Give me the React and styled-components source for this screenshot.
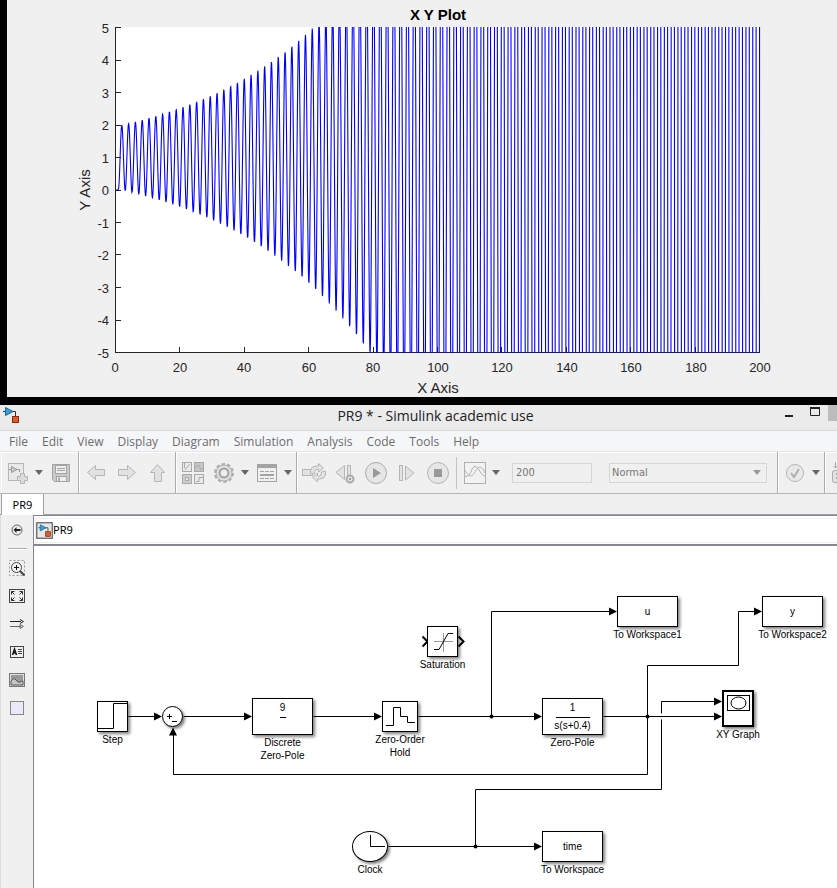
import React from "react";
import styled, { createGlobalStyle, css } from "styled-components";

const GlobalStyle = createGlobalStyle`
  * { box-sizing: border-box; }
  html, body { margin: 0; padding: 0; }
  body { background: #f0f0f0; overflow-x: hidden; }
  button, input, select { font: inherit; color: inherit; margin: 0; padding: 0; }
`;

const uiFont = `"Open Sans", "Noto Sans", sans-serif`;
const tahoma = `"Noto Sans", "DejaVu Sans", sans-serif`;
const fieldFont = `"DejaVu Sans Condensed", "Noto Sans", sans-serif`;
const arial = `"Liberation Sans", Arial, sans-serif`;

const Page = styled.div`
  display: flex;
  flex-direction: column;
  min-height: 100vh;
  font-family: ${uiFont};
`;

/* ---------- plot figure ---------- */

const Figure = styled.section`
  background: #f0f0f0;
  border-left: 7px solid #000;
  border-bottom: 8px solid #000;
`;

const PlotSvg = styled.svg`
  display: block;
  width: 100%;
  height: auto;
  font-family: ${arial};
  font-size: 13px;
  fill: #262626;
`;

const AX = { left: 108, right: 753, top: 27, bottom: 353 };
const px = (t) => AX.left + 0.5 + (t / 200) * (AX.right - AX.left - 1);
const py = (v) => AX.top + 0.5 + ((5 - v) / 10) * (AX.bottom - AX.top - 1);
const labelX = (t) => Math.round(AX.left + (t / 200) * (AX.right - AX.left));

function response(t) {
  if (t < 0.9) return 0;
  const omega = (2 * Math.PI) / 2.1125;
  return 1 - Math.exp(0.0234 * (t - 2.2)) * Math.cos(omega * (t - 0.9));
}

/* Runs slightly past t = 200 so the last stroke crosses the whole axes box. */
function curvePath() {
  const parts = [];
  for (let i = 0; i <= 2002; i += 1) {
    const t = i / 10;
    parts.push(`${i ? "L" : "M"}${px(t).toFixed(2)} ${py(response(t)).toFixed(2)}`);
  }
  return parts.join("");
}

const CURVE = curvePath();
const X_TICKS = [0, 20, 40, 60, 80, 100, 120, 140, 160, 180, 200];
const Y_TICKS = [5, 4, 3, 2, 1, 0, -1, -2, -3, -4, -5];

function Plot() {
  return (
    <PlotSvg viewBox="0 0 830 397" role="img" aria-label="X Y Plot">
      <defs>
        <clipPath id="axes">
          <rect x="108" y="27" width="646" height="326" />
        </clipPath>
      </defs>
      <rect x="108" y="27" width="645" height="326" fill="#fff" />
      <g stroke="#262626" shapeRendering="crispEdges">
        <path d="M108.5 27V353M108 352.5H753" />
        {X_TICKS.map((t) => (
          <path key={t} d={`M${Math.floor(px(t)) + 0.5} 353v-6`} />
        ))}
        {Y_TICKS.map((v) => (
          <path key={v} d={`M108 ${Math.floor(py(v)) + 0.5}h6`} />
        ))}
      </g>
      <path d={CURVE} fill="none" stroke="#00f" strokeWidth="1.1" clipPath="url(#axes)" />
      <text x="431" y="20" textAnchor="middle" fontSize="15" fontWeight="700" fill="#000">
        X Y Plot
      </text>
      {X_TICKS.map((t) => (
        <text key={t} x={labelX(t)} y="372" textAnchor="middle">{t}</text>
      ))}
      {Y_TICKS.map((v) => (
        <text key={v} x="102" y={Math.round(py(v)) + 5} textAnchor="end">{v}</text>
      ))}
      <text x="431" y="393" textAnchor="middle" fontSize="15">X Axis</text>
      <text transform="translate(83 190) rotate(-90)" textAnchor="middle" fontSize="15">Y Axis</text>
    </PlotSvg>
  );
}

/* ---------- window chrome ---------- */

const Window = styled.section`
  flex: 1;
  display: flex;
  flex-direction: column;
  overflow: hidden;
`;

const TitleBar = styled.header`
  display: flex;
  height: 26px;
  background: #ebebeb;
  border-bottom: 1px solid #dadada;
`;

const TitleIcon = styled.div`
  width: 95px;
  padding: 2px 3px;
`;

const Title = styled.h1`
  flex: 1;
  margin: 0;
  font-size: 14px;
  font-weight: 400;
  line-height: 22px;
  text-align: center;
  white-space: nowrap;
  color: #222;
`;

const WindowControls = styled.div`
  display: flex;
  width: 61px;
`;

const WindowButton = styled.button`
  display: flex;
  align-items: center;
  justify-content: center;
  width: 26px;
  height: 16px;
  border: 0;
  background: ${(p) => (p.$close ? "#bcbcbc" : "transparent")};
  ${(p) => p.$close && css`width: 9px;`}
`;

const MenuBar = styled.nav`
  display: flex;
  gap: 14px;
  height: 21px;
  padding: 0 9px;
  background: #f5f6f8;
  border-bottom: 1px solid #e4e5e7;
`;

const MenuButton = styled.button`
  border: 0;
  background: none;
  font-size: 12px;
  line-height: 22px;
  color: #6d6d6d;
  white-space: nowrap;
`;

const ToolBar = styled.div`
  display: flex;
  height: 42px;
  padding-left: 1px;
  background: #f0f0f0;
  border-bottom: 1px solid #b4b4b4;
  box-shadow: inset 0 1px #fff;
`;

const ToolGroup = styled.div`
  display: flex;
  flex: none;
  align-items: center;
  gap: 1px;
  padding: 0 ${(p) => p.$end || 2}px 0 2px;
  border-right: 1px solid #adadad;
  box-shadow: inset 1px 1px #fff;
`;

const ToolButton = styled.button`
  display: flex;
  align-items: center;
  justify-content: center;
  width: 30px;
  height: 30px;
  border: 0;
  background: none;
`;

const CaretButton = styled(ToolButton)`
  width: 12px;
  margin-left: -1px;
`;

const ToolDivider = styled.div`
  width: 3px;
  height: 32px;
  border-right: 1px solid #c4c4c4;
  margin-right: 2px;
`;

const StopTime = styled.input`
  width: 80px;
  height: 20px;
  margin-left: 9px;
  padding: 0 3px;
  border: 1px solid #d6d6d6;
  background: #f0f0f0;
  font-family: ${fieldFont};
  font-size: 11px;
  color: #777;
`;

const SelectBox = styled.label`
  display: grid;
  align-items: center;
  width: 158px;
  height: 20px;
  margin-left: 16px;
  border: 1px solid #d6d6d6;
  svg { grid-area: 1 / 1; justify-self: end; margin-right: 5px; pointer-events: none; }
`;

const ModeSelect = styled.select`
  grid-area: 1 / 1;
  width: 100%;
  height: 18px;
  padding: 0 2px;
  border: 0;
  appearance: none;
  background: transparent;
  font-family: ${fieldFont};
  font-size: 11px;
  color: #777;
`;

const TabStrip = styled.div`
  display: flex;
  height: 21px;
  padding-left: 1px;
  box-shadow: inset 0 -1px #a0a0a0;
`;

const Tab = styled.button`
  width: 43px;
  border: 1px solid #a0a0a0;
  border-width: 0 1px;
  background: #fff;
  font-family: ${tahoma};
  font-size: 11px;
  line-height: 20px;
  color: #000;
`;

const Workspace = styled.div`
  flex: 1;
  display: flex;
`;

const Palette = styled.aside`
  display: flex;
  flex-direction: column;
  align-items: center;
  width: 33px;
  padding-top: 1px;
  border-left: 1px solid #dcdcdc;
`;

const PaletteButton = styled.button`
  display: flex;
  align-items: center;
  justify-content: center;
  width: 24px;
  height: 28px;
  border: 0;
  background: none;
`;

const PaletteDivider = styled.div`
  width: 19px;
  height: 2px;
  margin: 4px 0;
  border-top: 1px solid #b0b0b0;
  background: #fff;
`;

const Editor = styled.main`
  flex: 1;
  min-width: 0;
  display: flex;
  flex-direction: column;
  border-left: 1px solid #858894;
  background: #fff;
`;

const PathBar = styled.div`
  display: flex;
  align-items: center;
  height: 31px;
  padding-left: 2px;
  border-top: 1px solid #858894;
  border-bottom: 2px solid #858894;
  box-shadow: inset 1px 2px #fff, inset 2px 3px #eee, inset 0 -1px #fff, inset 0 -2px #eee;
`;

const PathItem = styled.a`
  font-family: ${tahoma};
  font-size: 11px;
  line-height: 16px;
  color: #000;
  text-decoration: none;
`;

/* ---------- diagram ---------- */

const Canvas = styled.div`
  position: relative;
  flex: 1;
  min-height: 342px;
  overflow: hidden;
  font-family: ${arial};
  font-size: 10px;
  line-height: 13px;
  color: #000;
`;

const Wires = styled.svg`
  position: absolute;
  inset: 0;
  width: 100%;
  height: 100%;
`;

const Node = styled.figure`
  position: absolute;
  left: ${(p) => p.$x}px;
  top: ${(p) => p.$y}px;
  width: ${(p) => p.$w}px;
  margin: 0;
  display: flex;
  flex-direction: column;
  align-items: center;
  gap: 1px;
`;

const Block = styled.div`
  display: flex;
  flex-direction: column;
  align-items: center;
  justify-content: center;
  width: 100%;
  height: ${(p) => p.$h}px;
  border: ${(p) => (p.$thick ? 2 : 1)}px solid #000;
  border-radius: ${(p) => (p.$round ? "50%" : "0")};
  background: #fff;
  box-shadow: 2px 2px 3px rgba(0, 0, 0, 0.5);
  svg { display: block; flex: none; }
`;

const Caption = styled.figcaption`
  text-align: center;
  white-space: pre;
`;

const Fraction = styled.div`
  display: flex;
  flex-direction: column;
  align-items: center;
  span:first-child {
    min-width: ${(p) => p.$bar}px;
    height: 17px;
    border-bottom: 1px solid #000;
    text-align: center;
  }
  span:last-child { height: 15px; padding-top: 1px; }
`;

function DiagramNode({ x, y, w, h, label, children, ...rest }) {
  return (
    <Node $x={x} $y={y} $w={w}>
      <Block $h={h} {...rest}>{children}</Block>
      {label && <Caption>{label}</Caption>}
    </Node>
  );
}

const right = (x, y) => `M${x} ${y}l-8 -4v8z`;
const WIRES = [
  "M94 170H122",
  "M149 170H212",
  "M279 170H342",
  "M384 170H502",
  "M457 170V65H577",
  "M569 170H682",
  "M613 228V119H704V65H722",
  "M613 228H139V188",
  "M354 300H502",
  "M441 300V243H627V173",
  "M627 167V155H682",
];
const HEADS = [
  right(128, 170), right(218, 170), right(348, 170), right(508, 170), right(583, 65),
  right(728, 65), right(688, 170), right(688, 155), right(508, 300), "M139 181l-4 8h8z",
];

function Diagram() {
  return (
    <Canvas>
      <Wires aria-hidden="true">
        <g transform="translate(.5 .5)" fill="none" stroke="#000">
          {WIRES.map((d) => <path key={d} d={d} />)}
          <path d="M388 90l5 5l-5 5M424 90l5 5l-5 5" strokeWidth="2" />
        </g>
        <g transform="translate(0 .5)">
          {HEADS.map((d) => <path key={d} d={d} />)}
        </g>
        <circle cx="457.5" cy="170.5" r="2" />
        <circle cx="613.5" cy="170.5" r="2" />
        <circle cx="441.5" cy="300.5" r="2" />
      </Wires>

      <DiagramNode x={63} y={155} w={31} h={31} label="Step">
        <svg width="29" height="29" fill="none" stroke="#000"><path d="M0 26.5H15.5V1.5H29" /></svg>
      </DiagramNode>
      <DiagramNode x={128} y={160} w={21} h={21} $round>
        <svg width="19" height="19" fill="none" stroke="#000" shapeRendering="crispEdges"><path d="M4 9.5h5M6.5 7v5M9 14.5h5" /></svg>
      </DiagramNode>
      <DiagramNode x={218} y={152} w={61} h={37} label={"Discrete\nZero-Pole"}>
        <Fraction $bar={6}><span>9</span><span /></Fraction>
      </DiagramNode>
      <DiagramNode x={348} y={155} w={36} h={31} label={"Zero-Order\nHold"}>
        <svg width="34" height="29" fill="none" stroke="#000"><path d="M3 23.5H10.5V5.5H17.5V14.5H24.5V20.5H32" /></svg>
      </DiagramNode>
      <DiagramNode x={393} y={80} w={31} h={31} label="Saturation">
        <svg width="29" height="29" fill="none">
          <path d="M6 14.5H25M15.5 6V25" stroke="#999" />
          <path d="M6 22.5H11L20 6.5H25" stroke="#000" />
        </svg>
      </DiagramNode>
      <DiagramNode x={583} y={50} w={61} h={31} label="To Workspace1">u</DiagramNode>
      <DiagramNode x={728} y={50} w={61} h={31} label="To Workspace2">y</DiagramNode>
      <DiagramNode x={508} y={152} w={61} h={37} label="Zero-Pole">
        <Fraction $bar={34}><span>1</span><span>s(s+0.4)</span></Fraction>
      </DiagramNode>
      <DiagramNode x={688} y={144} w={32} h={37} label="XY Graph" $thick>
        <svg width="28" height="33" fill="none" stroke="#000">
          <rect x="3.5" y="3.5" width="22" height="15" />
          <ellipse cx="14.5" cy="11" rx="7.5" ry="6" />
        </svg>
      </DiagramNode>
      <DiagramNode x={318} y={285} w={36} h={31} label="Clock" $round>
        <svg width="34" height="29" fill="none" stroke="#000"><path d="M17.5 3V14.5H32" /></svg>
      </DiagramNode>
      <DiagramNode x={508} y={285} w={61} h={31} label="To Workspace">time</DiagramNode>
    </Canvas>
  );
}

/* ---------- icons ---------- */

const G = "#b5b5b5";
const F = "#e2e2e2";

function Caret({ light }) {
  return <svg width="8" height="5"><path d="M0 0h8L4 5z" fill={light ? "#999" : "#666"} /></svg>;
}

function ModelIcon({ framed }) {
  return (
    <svg width="17" height="17" viewBox={framed ? "-3 -3 22 22" : "0 0 17 17"}>
      {framed && <rect x="-2" y="-2" width="20" height="20" fill="#e8e8e8" stroke="#555" strokeWidth="1.5" />}
      <path d="M0 4.5H3M9 4.5H12.5V9" fill="none" stroke="#333" />
      <path d="M2.5 .5L10 4.5L2.5 8.5z" fill="#3aa0d8" stroke="#146a9c" />
      <rect x="9.5" y="9.5" width="6" height="6" fill="#e2592b" stroke="#8c2b10" />
    </svg>
  );
}

const toolIcons = {
  create: (
    <svg width="22" height="22" fill="none" stroke={G}>
      <rect x="1.5" y="1.5" width="15" height="17" fill="#e9e9e9" />
      <path d="M2 7.5H5M9.5 7.5H12.5V10" stroke="#999" />
      <path d="M4.5 4.5L10 7.5L4.5 10.5z" fill="#ccc" stroke="#999" />
      <path d="M13.5 11.5h4v3h3v4h-3v3h-4v-3h-3v-4h3z" fill="#dcdcdc" />
    </svg>
  ),
  save: (
    <svg width="20" height="20" fill={F} stroke="#a4a4a4">
      <path d="M1.5 1.5H18.5V18.5H3.5L1.5 16.5z" fill="#c9c9c9" />
      <rect x="4.5" y="2.5" width="11" height="8" fill="#f0f0f0" />
      <path d="M6 5.5H14M6 7.5H14" />
      <rect x="5.5" y="13.5" width="10" height="5" fill="#eee" />
      <rect x="7" y="14.5" width="2" height="4" fill="#aaa" stroke="none" />
    </svg>
  ),
  back: <svg width="20" height="18" fill={F} stroke={G}><path d="M1.5 8.5L9.5 1.5V5.5H18.5V11.5H9.5V15.5z" /></svg>,
  forward: <svg width="20" height="18" fill={F} stroke={G}><path d="M18.5 8.5L10.5 1.5V5.5H1.5V11.5H10.5V15.5z" /></svg>,
  up: <svg width="18" height="20" fill={F} stroke={G}><path d="M8.5 1.5L15.5 9.5H12.5V18.5H5.5V9.5H1.5z" /></svg>,
  library: (
    <svg width="22" height="22" fill="#eaeaea" stroke="#a9a9a9">
      <rect x=".5" y=".5" width="9" height="9" /><rect x="12.5" y=".5" width="9" height="9" fill="#c6c6c6" />
      <rect x=".5" y="12.5" width="9" height="9" fill="#ccc" /><rect x="12.5" y="12.5" width="9" height="9" />
      <path d="M2.5 1V6M3 8L8 2M14 6q2 -5 3.5 -1t3 2M14 19.5h3v-4h4" fill="none" />
      <rect x="3.5" y="15.5" width="3" height="3" />
    </svg>
  ),
  settings: (
    <svg width="22" height="22" viewBox="-11 -11 22 22" fill="#e2e2e2" stroke="#adadad">
      <circle r="9" strokeWidth="2" strokeDasharray="3.5 2.155" fill="none" />
      <circle r="8" /><circle r="4.5" strokeWidth="2" stroke="#a4a4a4" /><circle r="2.5" fill="#f0f0f0" stroke="none" />
    </svg>
  ),
  explorer: (
    <svg width="22" height="20" fill="#f0f0f0" stroke="#a4a4a4">
      <rect x="1.5" y="1.5" width="19" height="17" /><path d="M1.5 3.5H20.5" strokeWidth="3" />
      <path d="M4 8.5h14M4 15.5h14" strokeDasharray="4 1" /><path d="M4 12h14" strokeWidth="2" />
    </svg>
  ),
  update: (
    <svg width="26" height="20" fill={F} stroke={G}>
      <rect x="1.5" y="6.5" width="10" height="6" />
      <path d="M9.5 11V7q1 -4 6 -4h2V.5L22.5 5L17.5 9V6.5h-2q-2 0 -2 4z" />
      <path d="M24.5 8v4q-1 4 -6 4h-2v3L11.5 14L16.5 10v3h2q2 0 2 -4z" />
    </svg>
  ),
  stepBack: (
    <svg width="22" height="22" fill={F} stroke={G}>
      <path d="M10.5 3.5V17.5L2 10.5z" /><rect x="13.5" y="3.5" width="3" height="11" />
      <circle cx="16" cy="17" r="3.5" strokeWidth="2" stroke="#aaa" /><circle cx="16" cy="17" r="1" fill="#888" stroke="none" />
    </svg>
  ),
  run: <svg width="24" height="24" fill="#e6e6e6" stroke="#adadad"><circle cx="12" cy="12" r="10.5" /><path d="M9 7L17 12L9 17z" fill="#999" stroke="none" /></svg>,
  stepForward: <svg width="18" height="18" fill={F} stroke={G}><rect x="1.5" y="1.5" width="3" height="15" /><path d="M7.5 2V16L16 9z" /></svg>,
  stop: <svg width="24" height="24" fill="#e6e6e6" stroke="#b5b5b5"><circle cx="12" cy="12" r="10.5" /><rect x="8" y="8" width="8" height="8" fill="#999" stroke="none" /></svg>,
  scope: (
    <svg width="24" height="24" fill="none" stroke="#b0b0b0">
      <rect x="1.5" y="1.5" width="21" height="21" fill="#f2f2f2" />
      <path d="M2 15C8 18 8 5 12 5.5S18 15 22 15M2 9C6 18 10 15 12 11S18 2 22 12" />
    </svg>
  ),
  check: (
    <svg width="20" height="20" fill="#e9e9e9" stroke="#b5b5b5"><circle cx="10" cy="10" r="8.5" /><path d="M6 10l3 4l5 -8" fill="none" stroke="#b0b0b0" strokeWidth="2" /></svg>
  ),
  build: (
    <svg width="22" height="22" fill={F} stroke="#a9a9a9"><path d="M4.5 0V6M2.5 4l2 2l2 -2" fill="none" /><rect x="1.5" y="8.5" width="18" height="12" rx="2" /><path d="M5 12h3M5 16h3" strokeWidth="2" /></svg>
  ),
};

const paletteIcons = [
  ["Fit to view", (
    <svg width="16" height="14" fill="none" stroke="#333">
      <rect x=".5" y=".5" width="15" height="13" fill="#eee" stroke="#444" />
      <path d="M2.5 5.5V2.5H5.5M2.5 2.5l3 3M10.5 2.5h3v3M13.5 2.5l-3 3M2.5 8.5v3h3M2.5 11.5l3 -3M13.5 8.5v3h-3M13.5 11.5l-3 -3" />
    </svg>
  )],
  ["Sample time", (
    <svg width="16" height="16" fill="none" stroke="#222">
      <path d="M1 5.5H12" /><path d="M11 3.5L14.5 5.5L11 7.5" /><path d="M1 10.5H12M11 8.5L14.5 10.5L11 12.5z" stroke="#666" />
    </svg>
  )],
  ["Annotation", (
    <svg width="14" height="12" fill="#f0f0f0" stroke="#444">
      <rect x=".5" y=".5" width="13" height="11" />
      <path d="M2.5 9L4.5 3L6.5 9M3 7H6" fill="none" strokeWidth="1.5" stroke="#111" /><path d="M8 3.5h4M8 5.5h4M8 7.5h4" />
    </svg>
  )],
  ["Image", (
    <svg width="16" height="14" fill="#e0e0e0" stroke="#777">
      <rect x=".5" y=".5" width="15" height="13" /><rect x="2" y="2" width="12" height="10" fill="#999" stroke="none" />
      <path d="M2 8Q5 4 7 7T11 9T14 8V12H2z" fill="#c4c4c4" stroke="#555" />
    </svg>
  )],
  ["Area", <svg width="14" height="14"><rect x=".5" y=".5" width="13" height="13" fill="#e9e9fb" stroke="#888" /></svg>],
];

function Tool({ name, label }) {
  return <ToolButton aria-label={label}>{toolIcons[name]}</ToolButton>;
}

function More({ label }) {
  return <CaretButton aria-label={label}><Caret /></CaretButton>;
}

const MENUS = ["File", "Edit", "View", "Display", "Diagram", "Simulation", "Analysis", "Code", "Tools", "Help"];

export default function App() {
  return (
    <Page>
      <GlobalStyle />
      <Figure><Plot /></Figure>
      <Window>
        <TitleBar>
          <TitleIcon><ModelIcon /></TitleIcon>
          <Title>PR9 * - Simulink academic use</Title>
          <WindowControls>
            <WindowButton aria-label="Minimize"><svg width="8" height="12"><rect y="8" width="8" height="2" fill="#222" /></svg></WindowButton>
            <WindowButton aria-label="Maximize"><svg width="10" height="12"><path d="M.5 2V8.5H9.5V2" fill="none" stroke="#222" /><rect width="10" height="2" fill="#222" /></svg></WindowButton>
            <WindowButton $close aria-label="Close" />
          </WindowControls>
        </TitleBar>
        <MenuBar>
          {MENUS.map((m) => <MenuButton key={m}>{m}</MenuButton>)}
        </MenuBar>
        <ToolBar>
          <ToolGroup>
            <Tool name="create" label="New model" /><More label="New options" /><Tool name="save" label="Save" />
          </ToolGroup>
          <ToolGroup>
            <Tool name="back" label="Back" /><Tool name="forward" label="Forward" /><Tool name="up" label="Up" />
          </ToolGroup>
          <ToolGroup>
            <Tool name="library" label="Library" />
            <Tool name="settings" label="Settings" /><More label="Settings options" />
            <Tool name="explorer" label="Explorer" /><More label="Explorer options" />
          </ToolGroup>
          <ToolGroup $end={10}>
            <Tool name="update" label="Update diagram" />
            <Tool name="stepBack" label="Step back" />
            <Tool name="run" label="Run" />
            <Tool name="stepForward" label="Step forward" />
            <Tool name="stop" label="Stop" />
            <ToolDivider />
            <Tool name="scope" label="Data inspector" /><More label="Inspector options" />
            <StopTime aria-label="Stop time" defaultValue="200" />
            <SelectBox>
              <ModeSelect aria-label="Simulation mode" defaultValue="Normal"><option>Normal</option></ModeSelect>
              <Caret light />
            </SelectBox>
          </ToolGroup>
          <ToolGroup>
            <Tool name="check" label="Model advisor" /><More label="Advisor options" />
          </ToolGroup>
          <ToolGroup>
            <Tool name="build" label="Build" />
          </ToolGroup>
        </ToolBar>
        <TabStrip><Tab>PR9</Tab></TabStrip>
        <Workspace>
          <Palette>
            <PaletteButton aria-label="Hide browser">
              <svg width="12" height="12" fill="none" stroke="#666"><circle cx="6" cy="6" r="5" fill="#eee" /><path d="M5.5 3L2.5 6L5.5 9V7H9.5V5H5.5z" fill="#222" stroke="none" /></svg>
            </PaletteButton>
            <PaletteDivider />
            <PaletteButton aria-label="Zoom">
              <svg width="17" height="17" fill="none" stroke="#444">
                <rect x=".5" y=".5" width="15" height="15" stroke="#999" strokeDasharray="2 2" />
                <circle cx="7.5" cy="7.5" r="5" fill="#f4f4f4" /><path d="M11 11l4.5 4.5" strokeWidth="2" /><path d="M5 7.5h5M7.5 5v5" stroke="#111" />
              </svg>
            </PaletteButton>
            {paletteIcons.map(([label, icon]) => <PaletteButton key={label} aria-label={label}>{icon}</PaletteButton>)}
          </Palette>
          <Editor>
            <PathBar><ModelIcon framed /><PathItem href="#pr9">PR9</PathItem></PathBar>
            <Diagram />
          </Editor>
        </Workspace>
      </Window>
    </Page>
  );
}
